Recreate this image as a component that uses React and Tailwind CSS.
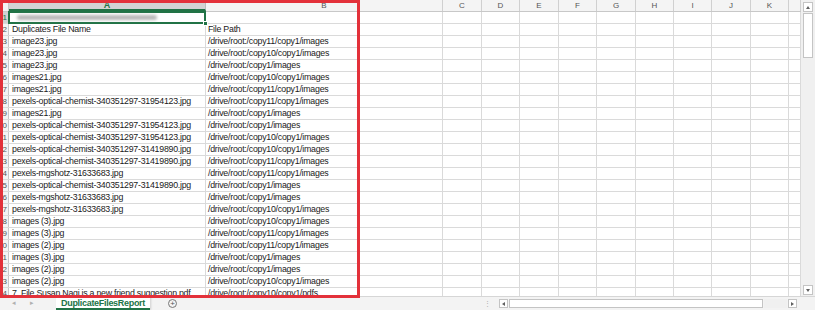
import React from "react";

const rows = [
  ["Duplicates File Name", "File Path"],
  ["image23.jpg", "/drive/root:/copy11/copy1/images"],
  ["image23.jpg", "/drive/root:/copy10/copy1/images"],
  ["image23.jpg", "/drive/root:/copy1/images"],
  ["images21.jpg", "/drive/root:/copy10/copy1/images"],
  ["images21.jpg", "/drive/root:/copy11/copy1/images"],
  ["pexels-optical-chemist-340351297-31954123.jpg", "/drive/root:/copy11/copy1/images"],
  ["images21.jpg", "/drive/root:/copy1/images"],
  ["pexels-optical-chemist-340351297-31954123.jpg", "/drive/root:/copy1/images"],
  ["pexels-optical-chemist-340351297-31954123.jpg", "/drive/root:/copy10/copy1/images"],
  ["pexels-optical-chemist-340351297-31419890.jpg", "/drive/root:/copy10/copy1/images"],
  ["pexels-optical-chemist-340351297-31419890.jpg", "/drive/root:/copy11/copy1/images"],
  ["pexels-mgshotz-31633683.jpg", "/drive/root:/copy11/copy1/images"],
  ["pexels-optical-chemist-340351297-31419890.jpg", "/drive/root:/copy1/images"],
  ["pexels-mgshotz-31633683.jpg", "/drive/root:/copy1/images"],
  ["pexels-mgshotz-31633683.jpg", "/drive/root:/copy10/copy1/images"],
  ["images (3).jpg", "/drive/root:/copy10/copy1/images"],
  ["images (3).jpg", "/drive/root:/copy11/copy1/images"],
  ["images (2).jpg", "/drive/root:/copy11/copy1/images"],
  ["images (3).jpg", "/drive/root:/copy1/images"],
  ["images (2).jpg", "/drive/root:/copy1/images"],
  ["images (2).jpg", "/drive/root:/copy10/copy1/images"],
  ["7. File Susan Nagi is a new friend suggestion.pdf", "/drive/root:/copy10/copy1/pdfs"],
];

const extraCols = [
  ["C", "w-[39px]"],
  ["D", "w-[38px]"],
  ["E", "w-[39px]"],
  ["F", "w-[38px]"],
  ["G", "w-[39px]"],
  ["H", "w-[38px]"],
  ["I", "w-[38px]"],
  ["J", "w-[39px]"],
  ["K", "w-[38px]"],
  ["", "w-[12px]"],
];

function EmptyCells() {
  return extraCols.map(([l, w], i) => (
    <div key={i} className={`${w} shrink-0 border-r border-[#dadada] h-full`} />
  ));
}

export default function App() {
  return (
    <div
      className="relative w-[815px] h-[310px] overflow-hidden bg-white text-[#1a1a1a]"
      style={{ fontFamily: "'Liberation Sans', Arial, sans-serif" }}
    >
      <div className="flex h-[296px]">
        <div className="w-[801px] shrink-0 overflow-hidden flex flex-col">
          {/* column header */}
          <div className="flex h-[12px] shrink-0 bg-[#f4f4f4] border-b border-[#c8c8c8] text-[8px] text-[#555] leading-[11px]">
            <div className="w-[9px] shrink-0 border-r border-[#c8c8c8]" />
            <div className="w-[197px] shrink-0 bg-[#d3d3d3] border-r border-[#bdbdbd] border-b-2 border-b-[#217346] text-center text-[#217346] font-bold text-[9px]">
              A
            </div>
            <div className="w-[237px] shrink-0 border-r border-[#d0d0d0] text-center">B</div>
            {extraCols.map(([l, w], i) => (
              <div key={i} className={`${w} shrink-0 border-r border-[#d0d0d0] text-center`}>
                {l}
              </div>
            ))}
          </div>
          {/* row 1 */}
          <div className="flex h-[12px] shrink-0 border-b border-[#dadada]">
            <div className="w-[9px] shrink-0 bg-[#d3d3d3] border-r border-[#217346] text-[8px] leading-[11px] text-right pr-[1px] text-[#217346]">1</div>
            <div className="relative w-[197px] shrink-0 border-r border-[#dadada]">
              <div className="absolute -inset-[1px] border-2 border-[#217346]" />
              <div className="absolute right-[-3px] bottom-[-3px] w-[5px] h-[5px] bg-[#217346] border border-white" />
              <div className="pl-[8px] pt-[3px] h-full">
                <div className="w-[140px] h-[5px] rounded-full bg-[#b8b8b8] blur-[1.5px]" />
              </div>
            </div>
            <div className="w-[237px] shrink-0 border-r border-[#dadada]" />
            <EmptyCells />
          </div>
          {rows.map((r, i) => (
            <div key={i} className="flex h-[12px] shrink-0 border-b border-[#dadada] text-[8.8px] leading-[11px] tracking-[-0.25px]">
              <div className="w-[9px] shrink-0 bg-[#f4f4f4] border-r border-[#c8c8c8] text-[8px] tracking-normal text-[#555] text-right pr-[1px] overflow-hidden whitespace-nowrap flex justify-end">
                {i + 2}
              </div>
              <div className="w-[197px] shrink-0 border-r border-[#dadada] pl-[3px] whitespace-nowrap overflow-visible">
                {r[0]}
              </div>
              <div className="w-[237px] shrink-0 border-r border-[#dadada] pl-[2px] whitespace-nowrap overflow-hidden bg-white">
                {r[1]}
              </div>
              <EmptyCells />
            </div>
          ))}
        </div>
        {/* vertical scrollbar */}
        <div className="w-[14px] shrink-0 bg-[#f0f0f0] flex flex-col items-center pt-[2px] pb-[1px]">
          <div className="w-[10px] h-[10px] bg-white border border-[#c4c4c4] flex items-center justify-center">
            <div className="w-0 h-0 border-l-[2px] border-r-[2px] border-b-[3px] border-l-transparent border-r-transparent border-b-[#606060]" />
          </div>
          <div className="w-[10px] h-[45px] bg-white border border-[#c4c4c4] mt-[1px]" />
          <div className="flex-1" />
          <div className="w-[10px] h-[10px] bg-white border border-[#c4c4c4] flex items-center justify-center">
            <div className="w-0 h-0 border-l-[2px] border-r-[2px] border-t-[3px] border-l-transparent border-r-transparent border-t-[#606060]" />
          </div>
        </div>
      </div>
      {/* bottom bar */}
      <div className="flex items-center h-[14px] bg-[#f3f3f3] border-t border-[#d6d6d6] text-[9px]">
        <div className="w-[56px] flex items-center gap-[14px] pl-[12px] text-[#b0b0b0] text-[7px]">
          <span>◂</span>
          <span>▸</span>
        </div>
        <div className="h-full bg-white border-b-2 border-[#217346] px-[5px] text-[#217346] font-bold leading-[12px] tracking-[-0.3px] shadow-[1px_0_2px_rgba(0,0,0,0.15)]">
          DuplicateFilesReport
        </div>
        <div className="ml-[18px] w-[9px] h-[9px] rounded-full border border-[#777] flex items-center justify-center text-[8px] leading-none text-[#555]">
          +
        </div>
        <div className="ml-[307px] text-[#aaa] text-[7px] leading-none">⋮</div>
        <div className="ml-[8px] w-[298px] h-[10px] flex items-center gap-[1px]">
          <div className="w-[9px] h-[9px] bg-white border border-[#c4c4c4] flex items-center justify-center">
            <div className="w-0 h-0 border-t-[2px] border-b-[2px] border-r-[3px] border-t-transparent border-b-transparent border-r-[#606060]" />
          </div>
          <div className="w-[254px] h-[9px] bg-white border border-[#c4c4c4]" />
          <div className="flex-1 h-[9px] bg-[#f0f0f0]" />
          <div className="w-[9px] h-[9px] bg-white border border-[#c4c4c4] flex items-center justify-center">
            <div className="w-0 h-0 border-t-[2px] border-b-[2px] border-l-[3px] border-t-transparent border-b-transparent border-l-[#606060]" />
          </div>
        </div>
      </div>
      {/* red highlight box */}
      <div className="absolute left-0 top-0 w-[360px] h-[298px] border-[3px] border-[#e3313a] pointer-events-none" />
    </div>
  );
}
